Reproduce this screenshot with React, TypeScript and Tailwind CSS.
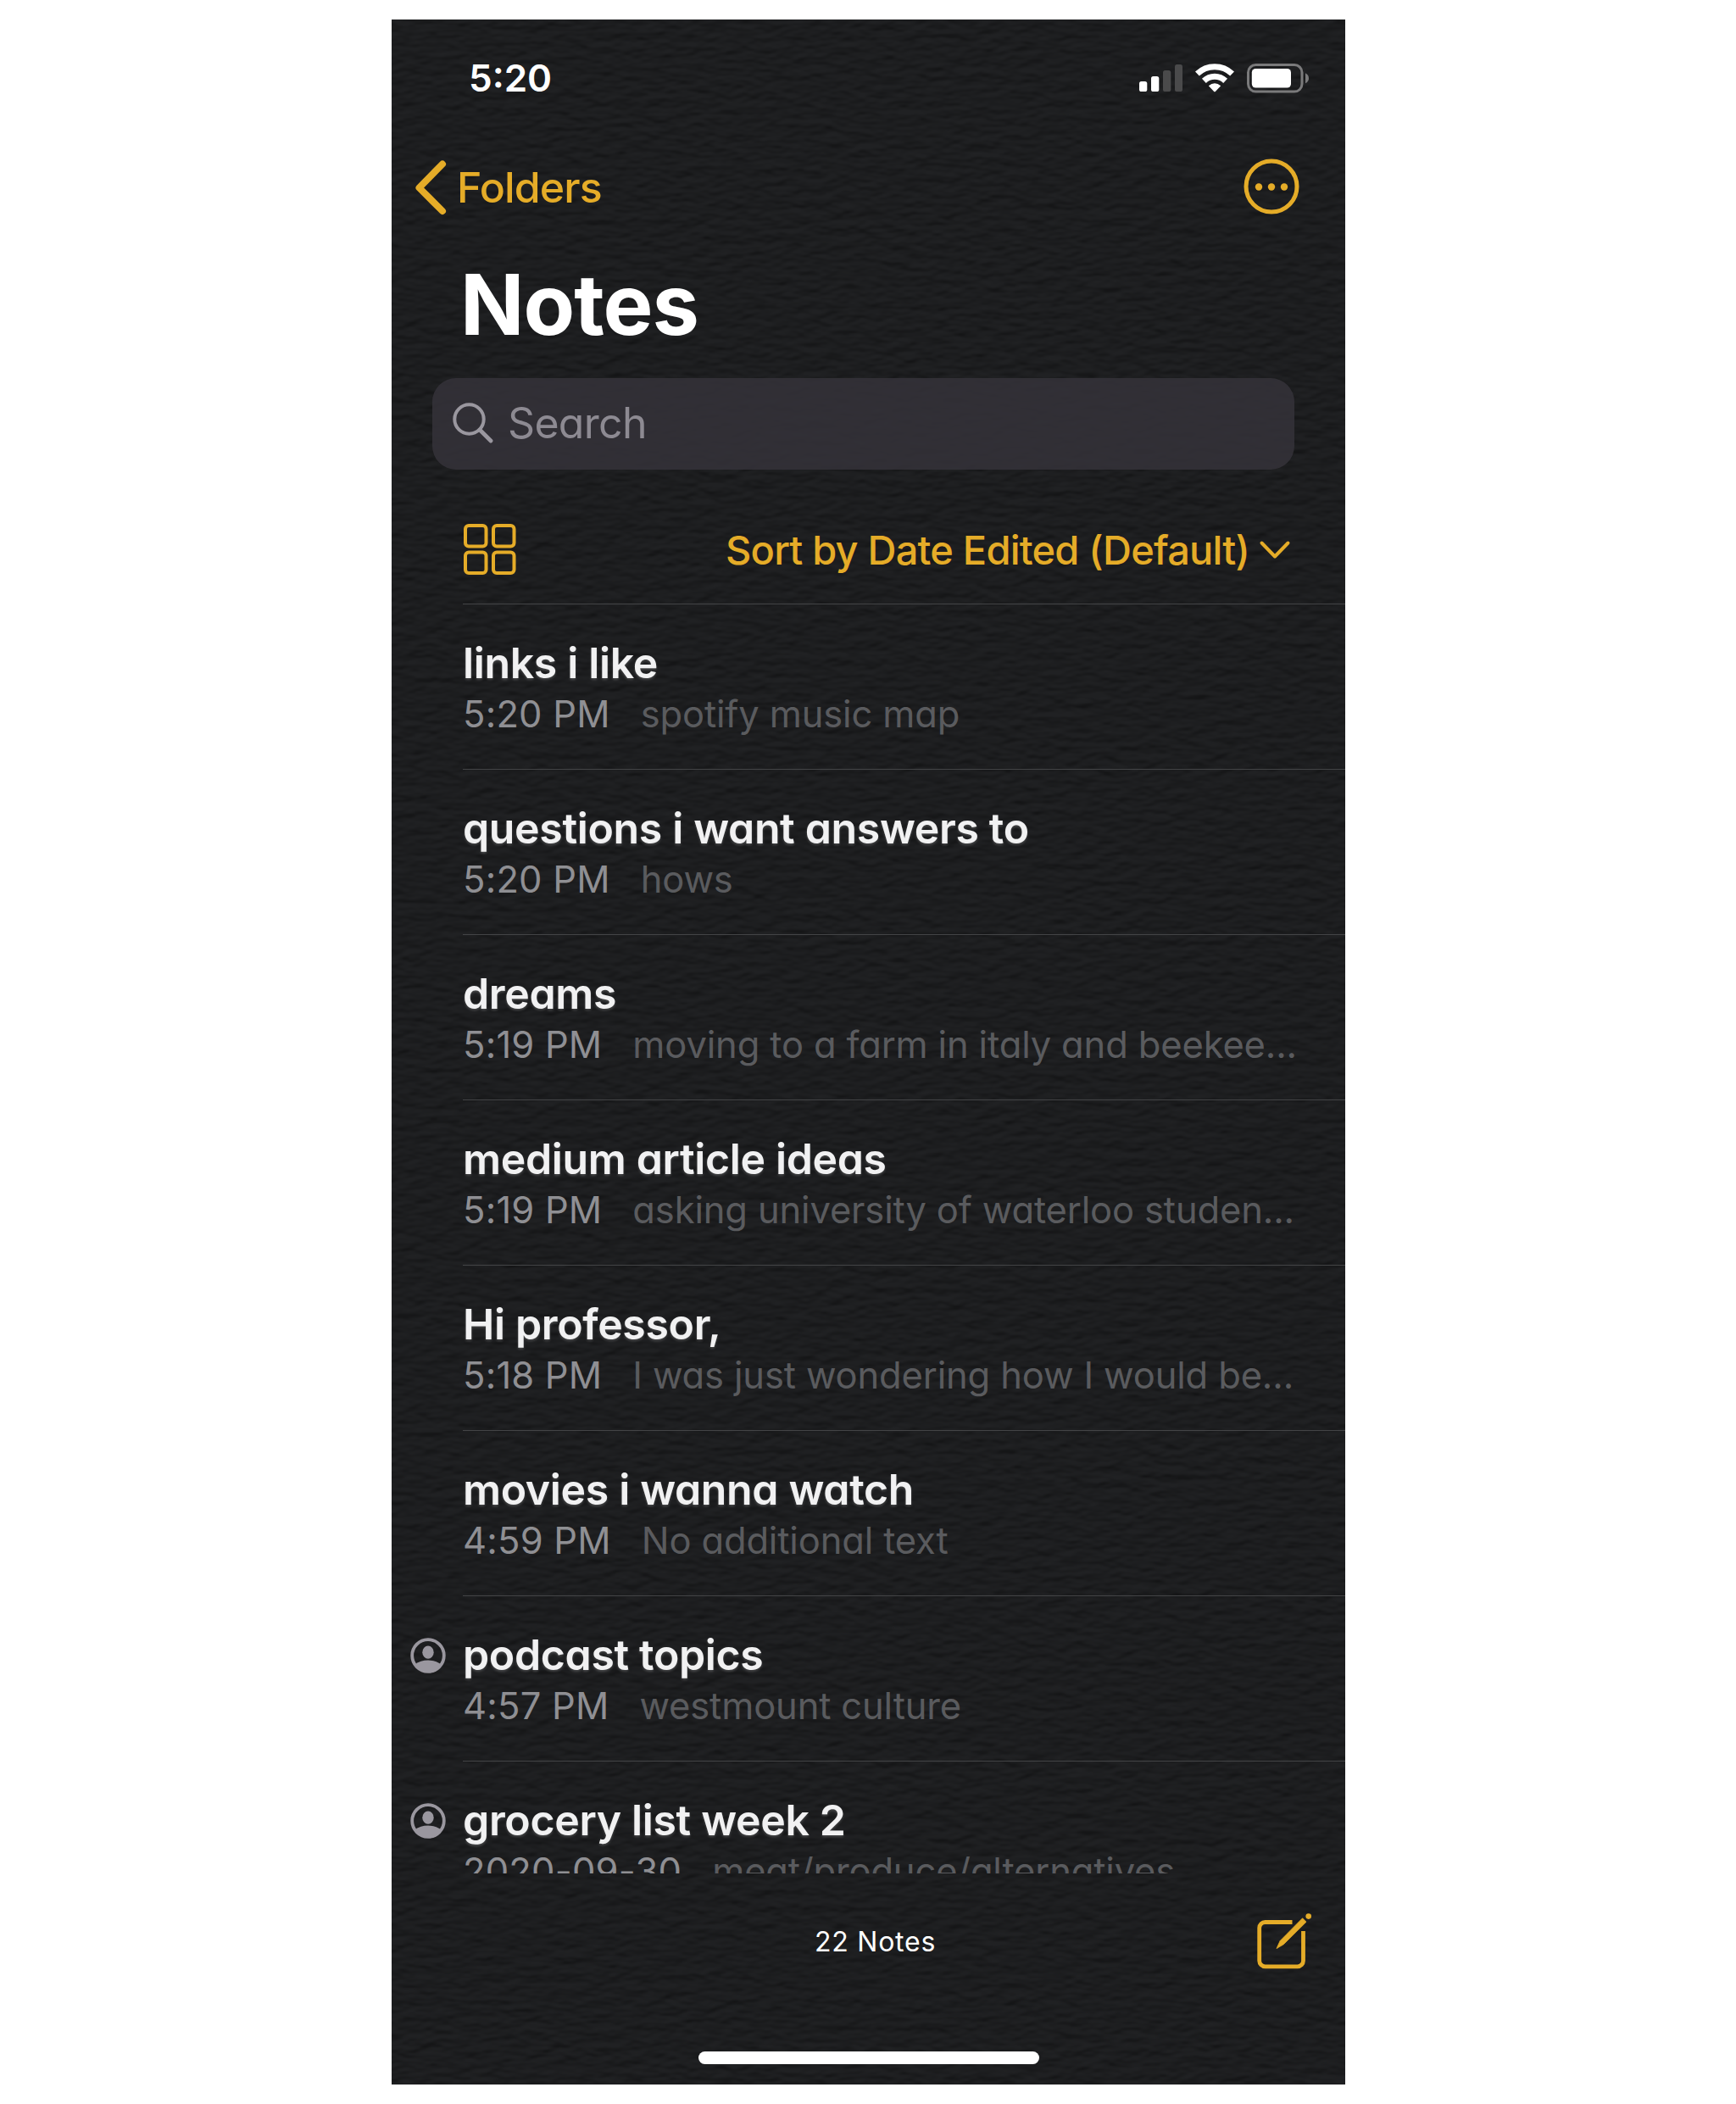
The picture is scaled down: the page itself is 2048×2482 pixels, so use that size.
type Note = { title: string; time: string; preview: string; shared?: boolean };

const notes: Note[] = [
  { title: "links i like", time: "5:20 PM", preview: "spotify music map" },
  { title: "questions i want answers to", time: "5:20 PM", preview: "hows" },
  { title: "dreams", time: "5:19 PM", preview: "moving to a farm in italy and beekee..." },
  { title: "medium article ideas", time: "5:19 PM", preview: "asking university of waterloo studen..." },
  { title: "Hi professor,", time: "5:18 PM", preview: "I was just wondering how I would be..." },
  { title: "movies i wanna watch", time: "4:59 PM", preview: "No additional text" },
  { title: "podcast topics", time: "4:57 PM", preview: "westmount culture", shared: true },
  { title: "grocery list week 2", time: "2020-09-30", preview: "meat/produce/alternatives", shared: true },
];

/* Embossed paper grain behind the whole screen. */
function PaperTexture() {
  return (
    <svg className="absolute inset-0 h-full w-full" aria-hidden="true">
      <filter id="paper" x="0" y="0" width="100%" height="100%" colorInterpolationFilters="sRGB">
        <feTurbulence type="fractalNoise" baseFrequency="0.045 0.1" numOctaves="2" seed="7" />
        <feDiffuseLighting surfaceScale="1.7" diffuseConstant="1" lightingColor="#212224">
          <feDistantLight azimuth="80" elevation="60" />
        </feDiffuseLighting>
      </filter>
      <rect width="100%" height="100%" filter="url(#paper)" />
    </svg>
  );
}

function StatusIcons() {
  return (
    <div className="flex items-center">
      <svg className="h-[34px] w-[51px]" viewBox="0 0 51 34">
        <rect x="0" y="21" width="9.3" height="12" rx="2.6" fill="#fff" />
        <rect x="14" y="15" width="9.3" height="18" rx="2.6" fill="#fff" />
        <rect x="28" y="8" width="9.3" height="25" rx="2.6" fill="#4a4a4b" />
        <rect x="42" y="1" width="9" height="32" rx="2.6" fill="#4a4a4b" />
      </svg>
      <svg className="ml-[15px] h-[34px] w-[46px]" viewBox="-23 -33.5 46 34" fill="none" stroke="#fff" strokeWidth="7">
        <path d="M-20.6-21.4A29.7 29.7 0 0 1 20.6-21.4" />
        <path d="M-12.6-13.1A18.2 18.2 0 0 1 12.6-13.1" />
        <path d="M-7.2-7.2Q0-13.2 7.2-7.2L.8-.5Q0 .2-.8-.5Z" fill="#fff" stroke="none" />
      </svg>
      <svg className="ml-[15px] h-[35px] w-[73px]" viewBox="0 0 73 35">
        <rect x="1.5" y="1.5" width="63.5" height="31.6" rx="9" fill="none" stroke="#7a7a7b" strokeWidth="3" />
        <rect x="5.8" y="6" width="46.2" height="22.5" rx="4.5" fill="#fff" />
        <path d="M69 11.2q4 2 4 6t-4 6z" fill="#7a7a7b" />
      </svg>
    </div>
  );
}

function SharedIcon() {
  return (
    <svg className="mt-[5px] h-[42px] w-[42px]" viewBox="-21 -21 42 42" fill="#9a979f">
      <circle r="18.8" fill="none" stroke="#9a979f" strokeWidth="3.8" />
      <ellipse cx="0" cy="-3.8" rx="6.7" ry="7.6" />
      <path d="M-15.5 10.5Q-9 5.6 0 5.6T15.5 10.5A18.8 18.8 0 0 1-15.5 10.5Z" />
    </svg>
  );
}

function ComposeIcon() {
  return (
    <svg className="mb-[2px] h-[70px] w-[70px]" viewBox="10 10 70 70" fill="none" stroke="#e5ac28" strokeWidth="4.8">
      <path d="M54.5 22.5H22.5a6.8 6.8 0 0 0-6.8 6.8V68a6.8 6.8 0 0 0 6.8 6.8H60.7A6.8 6.8 0 0 0 67.5 68V33" />
      <path d="M66.6 17.8L71 22.2L44.2 48.8L36 53.6L40.1 44.6Z" fill="#e5ac28" strokeWidth="0.8" />
      <circle cx="73.7" cy="15.6" r="3.3" fill="#e5ac28" stroke="none" />
    </svg>
  );
}

function NoteRow({ note }: { note: Note }) {
  return (
    <li className="flex h-[195px] shrink-0">
      <div className="flex h-[137px] w-[84px] shrink-0 items-center pl-[22px]">{note.shared && <SharedIcon />}</div>
      <div className="min-w-0 grow border-t border-[#434446] pt-[39px] whitespace-nowrap">
        <h2 className="text-[50px] leading-[60px] font-semibold tracking-[-0.35px] text-[#f1f1f2] [text-shadow:0_2px_3px_rgba(255,255,255,0.18)]">
          {note.title}
        </h2>
        <p className="flex gap-[36px] text-[43.5px] leading-[60px]">
          <span className="tracking-[0.2px] text-[#8f8f93]">{note.time}</span>
          <span className="tracking-[-0.15px] text-[#5a5b5e]">{note.preview}</span>
        </p>
      </div>
    </li>
  );
}

export default function App() {
  return (
    <div className="h-[2482px] w-[2048px] bg-white pt-[23px] pl-[462px] font-['Inter',sans-serif]">
      <div className="relative h-[2436px] w-[1125px] overflow-hidden bg-[#1c1d1f]">
        <PaperTexture />
        <div className="relative flex h-full flex-col">
          <header className="flex h-[140px] items-center justify-between pr-[43px] pb-[2px] pl-[91px]">
            <span className="text-[44px] font-semibold text-white">5:20</span>
            <StatusIcons />
          </header>

          <nav className="flex h-[116px] items-center justify-between pr-[54px] pl-[27px] text-[#e5ac28]">
            <a className="flex items-center">
              <svg className="h-[66px] w-[39px]" viewBox="0 0 39 66" fill="none" stroke="currentColor" strokeWidth="8" strokeLinecap="round" strokeLinejoin="round">
                <path d="M33 5.5L5.5 33.5L33 61" />
              </svg>
              <span className="ml-[11px] text-[50px] font-[450] tracking-[-0.9px]">Folders</span>
            </a>
            <svg className="mb-[2px] h-[66px] w-[66px]" viewBox="-33 -33 66 66" fill="currentColor">
              <circle r="30" fill="none" stroke="currentColor" strokeWidth="5" />
              <circle cx="-15" cy="0.5" r="4.2" />
              <circle cy="0.5" r="4.2" />
              <circle cx="15" cy="0.5" r="4.2" />
            </svg>
          </nav>

          <h1 className="flex h-[160px] items-center pl-[81px] text-[99px] font-bold tracking-[-1px] text-white">Notes</h1>

          <div className="mt-[7px] mr-[60px] ml-[48px] flex h-[108px] items-center rounded-[28px] bg-[#35323a]/85 pb-[2px] pl-[23px] [font-feature-settings:'cv11']">
            <svg className="h-[50px] w-[50px]" viewBox="0 0 50 50" fill="none" stroke="#9a979f" strokeWidth="4">
              <circle cx="20.5" cy="20.5" r="17.2" />
              <path d="M33 33L46 46" strokeWidth="4.8" strokeLinecap="round" />
            </svg>
            <span className="ml-[16px] text-[50px] tracking-[-0.7px] text-[#8d8a92]">Search</span>
          </div>

          <div className="flex h-[158px] items-center justify-between pt-[32px] pr-[64px] pl-[84px] text-[#e5ac28]">
            <svg className="-mt-[3px] h-[62px] w-[64px]" viewBox="0 0 64 62" fill="none" stroke="currentColor" strokeWidth="4">
              <rect x="3" y="3" width="24.5" height="24.5" rx="4" />
              <rect x="36" y="3" width="24.5" height="24.5" rx="4" />
              <rect x="3" y="34.5" width="24.5" height="24.5" rx="4" />
              <rect x="36" y="34.5" width="24.5" height="24.5" rx="4" />
            </svg>
            <div className="flex items-center">
              <span className="text-[47px] font-medium tracking-[-0.8px]">Sort by Date Edited (Default)</span>
              <svg className="ml-[11px] h-[24px] w-[38px]" viewBox="0 0 38 24" fill="none" stroke="currentColor" strokeWidth="4" strokeLinecap="round" strokeLinejoin="round">
                <path d="M3.5 3.5L19 19.5L34.5 3.5" />
              </svg>
            </div>
          </div>

          <ul className="flex h-[1498px] flex-col overflow-hidden [font-feature-settings:'cv11']">
            {notes.map((n) => (
              <NoteRow key={n.title} note={n} />
            ))}
          </ul>

          <footer className="flex grow flex-col text-white">
            <div className="flex h-[161px] items-center justify-between pr-[37px] pl-[499px]">
              <span className="text-[32px] tracking-[0.75px]">22 Notes</span>
              <ComposeIcon />
            </div>
            <div className="mt-[49px] h-[15px] w-[402px] self-center rounded-full bg-white" />
          </footer>
        </div>
      </div>
    </div>
  );
}
